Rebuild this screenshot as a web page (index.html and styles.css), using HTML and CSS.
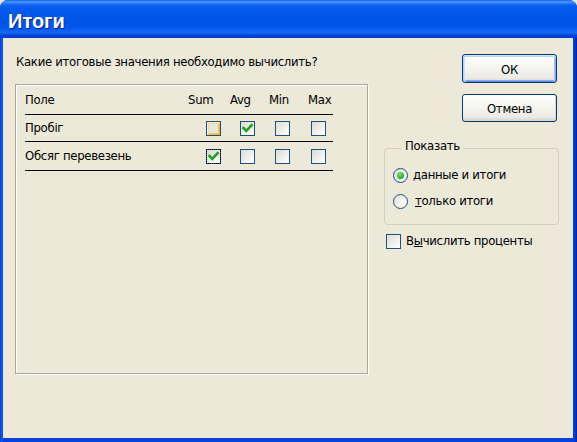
FILE: index.html
```html
<!DOCTYPE html>
<html lang="ru">
<head>
<meta charset="utf-8">
<title>Итоги</title>
<link rel="stylesheet" href="styles.css">
</head>
<body>
<div class="window">
  <div class="titlebar"><span class="title">Итоги</span></div>
  <div class="client">
    <div class="left">
      <div class="prompt">Какие итоговые значения необходимо вычислить?</div>
      <div class="panel">
        <div class="head">
          <span>Поле</span><span>Sum</span><span>Avg</span><span>Min</span><span>Max</span>
        </div>
        <div class="row r1">
          <span class="name">Пробіг</span>
          <span class="cb hover"></span>
          <span class="cb"><svg class="tick" viewBox="0 0 13 13"><path d="M2.5 6 L5.2 8.8 L10.6 3.2" /></svg></span>
          <span class="cb"></span>
          <span class="cb"></span>
        </div>
        <div class="row r2">
          <span class="name">Обсяг перевезень</span>
          <span class="cb focus"><svg class="tick" viewBox="0 0 13 13"><path d="M2.5 6 L5.2 8.8 L10.6 3.2" /></svg></span>
          <span class="cb"></span>
          <span class="cb"></span>
          <span class="cb"></span>
        </div>
      </div>
    </div>
    <div class="right">
      <button class="btn default">ОК</button>
      <button class="btn">Отмена</button>
      <fieldset class="group">
        <legend>Показать</legend>
        <div class="opt"><span class="radio on"></span><span class="t1"><span class="ak">д</span>анные и итоги</span></div>
        <div class="opt"><span class="radio"></span><span class="t2"><span class="ak">т</span>олько итоги</span></div>
      </fieldset>
      <div class="check"><span class="cb"></span><span>В<span class="ak">ы</span>числить проценты</span></div>
    </div>
  </div>
</div>
</body>
</html>
```
FILE: styles.css
```css
html, body {
  margin: 0;
  padding: 0;
  background: #ece9d8;
}
body {
  font-family: "DejaVu Sans Condensed", "DejaVu Sans", sans-serif;
  font-size: 13px;
  letter-spacing: -0.3px;
  color: #000;
}
.window {
  width: 577px;
  height: 442px;
  display: flex;
  flex-direction: column;
  border-radius: 8px 8px 0 0;
  overflow: hidden;
  background: linear-gradient(to right, #0a3bd0 0, #1660f0 2px, #0842d8 3px, #0842d8 573px, #0a3cd8 574px, #0032b8 576px, #001d98 577px);
}
.titlebar {
  height: 34px;
  padding-top: 4px;
  padding-left: 8px;
  background: linear-gradient(to bottom,
    #0a46d8 0, #3d92ff 1px, #3a8cff 3px, #1a6cf6 4px, #0a5cee 6px,
    #0058ea 12px, #0054e6 26px, #0a5ef0 30px, #1668f6 33px,
    #0048d8 35px, #003cc8 38px);
}
.title {
  display: block;
  font-family: "Liberation Sans", Arial, sans-serif;
  font-weight: bold;
  font-size: 20px;
  letter-spacing: 0;
  line-height: 34px;
  color: #fff;
  text-shadow: 1px 1px 0 #0a1e8c;
}
.client {
  flex: 1;
  margin: 0 4px 4px 3px;
  background: #ece9d8;
  display: flex;
  gap: 16px;
  padding: 16px 0 0 12px;
}
.left {
  width: 353px;
  display: flex;
  flex-direction: column;
}
.prompt {
  line-height: 16px;
  padding-left: 1px;
  margin-bottom: 14px;
}
.panel {
  box-sizing: border-box;
  width: 353px;
  height: 290px;
  border: 1px solid #aca899;
  box-shadow: 1px 1px 0 #fff, inset 1px 1px 0 #fff;
}
.head, .row {
  display: grid;
  width: 308px;
  margin-left: 9px;
  align-items: center;
  border-bottom: 1px solid #000;
  line-height: 16px;
}
.head {
  grid-template-columns: 163px 42px 39px 39px 25px;
  height: 29px;
}
.row {
  grid-template-columns: 181px 34px 35px 36px 22px;
}
.r1 { height: 26px; }
.r2 { height: 28px; }
.name { white-space: nowrap; }
.cb {
  box-sizing: border-box;
  width: 15px;
  height: 15px;
  border: 1px solid #1c5180;
  background: linear-gradient(135deg, #dcdcd5 0%, #ececE6 45%, #ffffff 100%);
  display: inline-flex;
  align-items: center;
  justify-content: center;
}
.cb.hover {
  background: #e6e5de;
  box-shadow: inset 1px 1px 0 #fff0cf, inset 2px 2px 0 #f9d68a, inset -1px -1px 0 #f8b330, inset -2px -2px 0 #fbc660;
}
.cb.focus {
  outline: 1px dotted #000;
  outline-offset: -1px;
}
.tick {
  width: 13px;
  height: 13px;
  display: block;
}
.tick path {
  fill: none;
  stroke: #21a121;
  stroke-width: 2.6;
  stroke-linecap: square;
}
.right {
  width: 175px;
  display: flex;
  flex-direction: column;
}
.btn {
  box-sizing: border-box;
  width: 95px;
  height: 28px;
  margin-left: 78px;
  padding: 1px 0 0 0;
  font: inherit;
  letter-spacing: -0.3px;
  color: #000;
  border: 1px solid #003c74;
  border-radius: 3px;
  background: linear-gradient(to bottom, #ffffff 0%, #f6f6f2 40%, #ecebe6 85%, #d6d0c5 100%);
  box-shadow: inset -1px -1px 0 #dcd8cc;
}
.btn + .btn { margin-top: 11px; }
.btn.default {
  height: 29px;
  box-shadow: inset 0 1px 0 #cee7ff, inset 0 2px 0 #bcd4f6, inset 1px 0 0 #bcd4f6, inset 2px 0 0 #cee0fa, inset -1px 0 0 #89ade4, inset -2px 0 0 #a4c2f0, inset 0 -1px 0 #6982ee, inset 0 -2px 0 #89ade4;
}
.group {
  margin: 16px 0 0 0;
  padding: 4px 8px 10px 8px;
  border: 1px solid #d0d0bf;
  border-radius: 4px;
  min-width: 0;
}
.group legend {
  padding: 0 3px 4px 3px;
  margin-left: 9px;
  line-height: 16px;
}
.opt {
  display: flex;
  align-items: center;
  height: 26px;
  gap: 5px;
  line-height: 16px;
}
.t2 { margin-left: 2px; }
.radio {
  box-sizing: border-box;
  width: 15px;
  height: 15px;
  border-radius: 50%;
  border: 1px solid #1c5180;
  background: radial-gradient(circle at 70% 70%, #ffffff 0%, #f4f3ee 40%, #dcd9cc 100%);
  display: inline-flex;
  align-items: center;
  justify-content: center;
}
.radio.on::after {
  content: "";
  width: 7px;
  height: 7px;
  border-radius: 50%;
  background: radial-gradient(circle at 40% 35%, #7ce27c 0%, #2fb42f 55%, #1a8e1a 100%);
}
.ak { text-decoration: underline; }
.check {
  display: flex;
  align-items: center;
  gap: 5px;
  margin: 8px 0 0 2px;
  height: 16px;
  line-height: 16px;
}
```
